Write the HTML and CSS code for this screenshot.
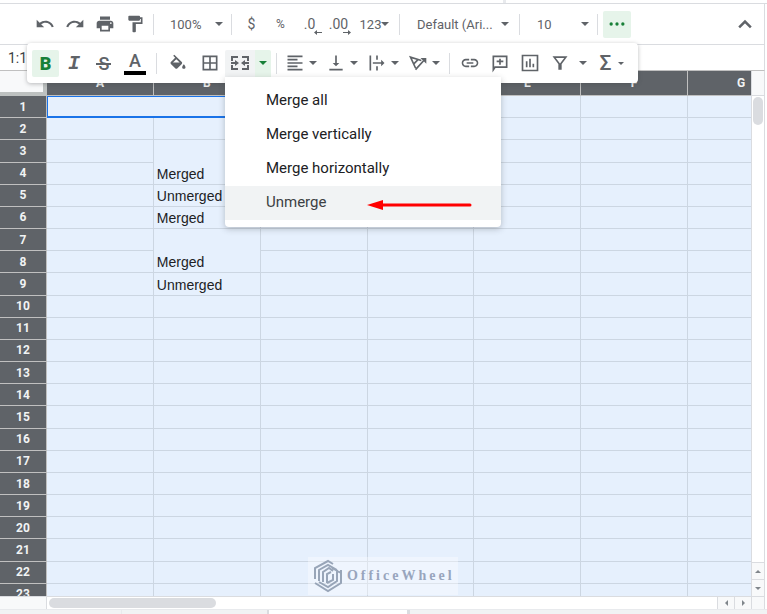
FILE: index.html
```html
<!DOCTYPE html>
<html lang="en">
<head>
    <meta charset="UTF-8">
    <meta name="viewport" content="width=device-width, initial-scale=1.0">
    <title>Spreadsheet</title>
    <link rel="stylesheet" href="styles.css">
</head>
<body>

<div class="app">
    <div class="top-strip"><div class="top-strip-left"></div></div>

    <!-- Main toolbar -->
    <div class="toolbar">
        <button class="tool" aria-label="Undo"><svg class="icon" viewBox="0 0 24 24"><path d="M12.5 8c-2.65 0-5.05.99-6.9 2.6L2 7v9h9l-3.62-3.62c1.39-1.16 3.16-1.88 5.12-1.88 3.54 0 6.55 2.31 7.6 5.5l2.37-.78C21.08 11.03 17.15 8 12.5 8z"/></svg></button>
        <button class="tool" aria-label="Redo"><svg class="icon" viewBox="0 0 24 24"><path d="M18.4 10.6C16.55 8.99 14.15 8 11.5 8c-4.65 0-8.58 3.03-9.96 7.22L3.9 16c1.05-3.19 4.05-5.5 7.6-5.5 1.95 0 3.73.72 5.12 1.88L13 16h9V7l-3.6 3.6z"/></svg></button>
        <button class="tool" aria-label="Print"><svg class="icon" viewBox="0 0 24 24"><path d="M19 8H5c-1.66 0-3 1.34-3 3v6h4v4h12v-4h4v-6c0-1.66-1.34-3-3-3zm-3 11H8v-5h8v5zm3-7c-.55 0-1-.45-1-1s.45-1 1-1 1 .45 1 1-.45 1-1 1zm-1-9H6v4h12V3z"/></svg></button>
        <button class="tool" aria-label="Paint format"><svg class="icon" viewBox="0 0 24 24"><path d="M18 4V3c0-.55-.45-1-1-1H5c-.55 0-1 .45-1 1v4c0 .55.45 1 1 1h12c.55 0 1-.45 1-1V6h1v4H9v11c0 .55.45 1 1 1h2c.55 0 1-.45 1-1v-9h8V4h-3z"/></svg></button>
        <span class="sep"></span>
        <label class="drop zoom"><select aria-label="Zoom"><option>100%</option></select></label>
        <span class="sep"></span>
        <button class="tool text first" aria-label="Format as currency">$</button>
        <button class="tool text small" aria-label="Format as percent">%</button>
        <button class="tool text" aria-label="Decrease decimal places">.0<svg class="decimal" viewBox="0 0 8 5"><path d="M3 0v2h5v1H3v2L0 2.500z"/></svg></button>
        <button class="tool text" aria-label="Increase decimal places">.00<svg class="decimal" viewBox="0 0 8 5"><path d="M5 0v2H0v1h5v2l3-2.500z"/></svg></button>
        <button class="tool text formats" aria-label="More formats">123<span class="caret"></span></button>
        <span class="sep"></span>
        <label class="drop font"><select aria-label="Font"><option>Default (Ari...</option></select></label>
        <span class="sep"></span>
        <label class="drop size"><select aria-label="Font size"><option>10</option></select></label>
        <span class="sep"></span>
        <button class="tool more active" aria-label="More"><svg class="icon" viewBox="0 0 24 24"><circle cx="5" cy="12" r="2"/><circle cx="12" cy="12" r="2"/><circle cx="19" cy="12" r="2"/></svg></button>
        <button class="tool collapse" aria-label="Hide the menus"><svg class="icon line" viewBox="0 0 24 24"><path d="M5 16l7-7 7 7"/></svg></button>

        <!-- Overflow toolbar -->
        <div class="overflow">
            <button class="tool bold active" aria-label="Bold">B</button>
            <button class="tool italic" aria-label="Italic">I</button>
            <button class="tool strike" aria-label="Strikethrough">S</button>
            <button class="tool color" aria-label="Text color"><span>A</span></button>
            <span class="sep"></span>
            <button class="tool fill" aria-label="Fill color"><svg class="icon" viewBox="0 -2 24 24"><path d="M16.560 8.940L7.620 0 6.210 1.410l2.380 2.380-5.150 5.150c-.59.59-.59 1.540 0 2.120l5.500 5.500c.29.29.68.44 1.060.44s.77-.15 1.060-.44l5.500-5.500c.59-.58.59-1.530 0-2.120zM6 9.500L10 5.400 14 9.500H6zM19 11.500s-2 2.170-2 3.500c0 1.100.9 2 2 2s2-.9 2-2c0-1.330-2-3.500-2-3.500z"/></svg></button>
            <button class="tool borders" aria-label="Borders"><svg class="icon" viewBox="0 0 24 24"><path d="M3 3v18h18V3H3zm8 16H5v-6h6v6zm0-8H5V5h6v6zm8 8h-6v-6h6v6zm0-8h-6V5h6v6z"/></svg></button>
            <div class="merge">
                <button class="tool merge-main" aria-label="Merge cells"><svg class="icon-wide" viewBox="0 0 18 14"><path class="stroke" d="M1 5V1h6M11 1h6v4M1 9v4h6M11 13h6V9M0 7h5M18 7h-5"/><path d="M4 4l4 3-4 3zM14 4l-4 3 4 3z"/></svg></button>
                <button class="tool merge-drop active" aria-label="Select merge type"><span class="caret"></span></button>
                <div class="menu" role="menu">
                    <button class="menu-item" role="menuitem">Merge all</button>
                    <button class="menu-item" role="menuitem">Merge vertically</button>
                    <button class="menu-item" role="menuitem">Merge horizontally</button>
                    <button class="menu-item selected" role="menuitem">Unmerge<svg class="arrow" viewBox="0 0 106 18"><path d="M1 12l16-5v10z"/><path class="shaft" d="M14 12h90"/></svg></button>
                </div>
            </div>
            <span class="sep"></span>
            <button class="tool pair" aria-label="Horizontal align"><svg class="icon" viewBox="0 0 24 24"><path d="M15 15H3v2h12v-2zm0-8H3v2h12V7zM3 13h18v-2H3v2zm0 8h18v-2H3v2zM3 3v2h18V3H3z"/></svg><span class="caret"></span></button>
            <button class="tool pair" aria-label="Vertical align"><svg class="icon" viewBox="0 0 24 24"><path d="M16 12h-3V3h-2v9H8l4 4 4-4zM4 19v2h16v-2H4z"/></svg><span class="caret"></span></button>
            <button class="tool pair" aria-label="Text wrapping"><svg class="icon" viewBox="0 0 24 24"><path d="M3 3h2v18H3zM11 3h2v5h-2zM11 16h2v5h-2zM7 11h10V8l4 4-4 4v-3H7z"/></svg><span class="caret"></span></button>
            <button class="tool pair" aria-label="Text rotation"><svg class="icon" viewBox="0 0 24 24"><path class="stroke" d="M9 18L3 5l13 4M7 13l5-5M9 20L19 9"/><path d="M22 6v7l-7-7z"/></svg><span class="caret"></span></button>
            <span class="sep"></span>
            <button class="tool" aria-label="Insert link"><svg class="icon" viewBox="0 0 24 24"><path d="M3.900 12c0-1.710 1.390-3.100 3.100-3.100h4V7H7c-2.760 0-5 2.240-5 5s2.240 5 5 5h4v-1.900H7c-1.710 0-3.100-1.390-3.100-3.100zM8 13h8v-2H8v2zm9-6h-4v1.900h4c1.710 0 3.100 1.390 3.100 3.100s-1.390 3.100-3.100 3.100h-4V17h4c2.760 0 5-2.240 5-5s-2.240-5-5-5z"/></svg></button>
            <button class="tool" aria-label="Insert comment"><svg class="icon" viewBox="0 0 24 24"><path class="stroke" d="M4 20V4h16v13H6zM12 7v7M8 10h8"/></svg></button>
            <button class="tool" aria-label="Insert chart"><svg class="icon" viewBox="0 0 24 24"><path class="stroke" d="M3 3h18v18H3zM8 17v-7M12 17V7M16 17v-4"/></svg></button>
            <button class="tool filter" aria-label="Create a filter"><svg class="icon" viewBox="0 0 24 24"><path class="stroke" d="M5 5h14l-6 8v6h-2v-6z"/></svg></button>
            <button class="tool views" aria-label="Filter views"><span class="caret"></span></button>
            <button class="tool sigma" aria-label="Functions">Σ<span class="caret"></span></button>
        </div>
    </div>

    <!-- Name box -->
    <div class="name-bar"><input type="text" value="1:1" aria-label="Name box"></div>

    <!-- Grid -->
    <div class="grid-area">
        <div class="sheet">
            <table class="cells">
                <thead>
                    <tr><th class="corner"></th><th>A</th><th>B</th><th>C</th><th>D</th><th>E</th><th>F</th><th>G</th></tr>
                </thead>
                <tbody>
                    <tr><th>1</th><td class="current" colspan="3"></td><td></td><td></td><td></td><td></td></tr>
                    <tr><th>2</th><td></td><td></td><td></td><td></td><td></td><td></td><td></td></tr>
                    <tr><th>3</th><td></td><td rowspan="2">Merged</td><td></td><td></td><td></td><td></td><td></td></tr>
                    <tr><th>4</th><td></td><td></td><td></td><td></td><td></td><td></td></tr>
                    <tr><th>5</th><td></td><td>Unmerged</td><td></td><td></td><td></td><td></td><td></td></tr>
                    <tr><th>6</th><td></td><td>Merged</td><td></td><td></td><td></td><td></td><td></td></tr>
                    <tr><th>7</th><td></td><td rowspan="2">Merged</td><td></td><td></td><td></td><td></td><td></td></tr>
                    <tr><th>8</th><td></td><td></td><td></td><td></td><td></td><td></td></tr>
                    <tr><th>9</th><td></td><td>Unmerged</td><td></td><td></td><td></td><td></td><td></td></tr>
                    <tr><th>10</th><td></td><td></td><td></td><td></td><td></td><td></td><td></td></tr>
                    <tr><th>11</th><td></td><td></td><td></td><td></td><td></td><td></td><td></td></tr>
                    <tr><th>12</th><td></td><td></td><td></td><td></td><td></td><td></td><td></td></tr>
                    <tr><th>13</th><td></td><td></td><td></td><td></td><td></td><td></td><td></td></tr>
                    <tr><th>14</th><td></td><td></td><td></td><td></td><td></td><td></td><td></td></tr>
                    <tr><th>15</th><td></td><td></td><td></td><td></td><td></td><td></td><td></td></tr>
                    <tr><th>16</th><td></td><td></td><td></td><td></td><td></td><td></td><td></td></tr>
                    <tr><th>17</th><td></td><td></td><td></td><td></td><td></td><td></td><td></td></tr>
                    <tr><th>18</th><td></td><td></td><td></td><td></td><td></td><td></td><td></td></tr>
                    <tr><th>19</th><td></td><td></td><td></td><td></td><td></td><td></td><td></td></tr>
                    <tr><th>20</th><td></td><td></td><td></td><td></td><td></td><td></td><td></td></tr>
                    <tr><th>21</th><td></td><td></td><td></td><td></td><td></td><td></td><td></td></tr>
                    <tr><th>22</th><td></td><td></td><td></td><td></td><td></td><td></td><td></td></tr>
                    <tr><th>23</th><td></td><td></td><td></td><td></td><td></td><td></td><td></td></tr>
                </tbody>
            </table>
            <div class="watermark">
                <svg class="logo" viewBox="0 0 30 34"><path d="M2 20V9L15 2l5 3M6 22V11l9-5 9 5M28 11v13l-13 8L2 24M24 11v11l-9 6-9-5M10 23V13l6-4 4 3M14 24V15l4-2M19 9l9 5M14 24l6-3v-6"/></svg>
                <span>OfficeWheel</span>
            </div>
        </div>
        <div class="vscroll">
            <div class="vscroll-head"></div>
            <div class="vscroll-track"><div class="vthumb"></div></div>
            <button class="step" aria-label="Scroll up"><span class="tri up"></span></button>
            <button class="step" aria-label="Scroll down"><span class="tri down"></span></button>
        </div>
    </div>

    <div class="hscroll">
        <div class="hscroll-corner"></div>
        <div class="hscroll-track"><div class="hthumb"></div></div>
        <button class="step" aria-label="Scroll left"><span class="tri left"></span></button>
        <button class="step" aria-label="Scroll right"><span class="tri right"></span></button>
        <div class="hscroll-end"></div>
    </div>

    <!-- Sheet tabs -->
    <div class="tabs"><div class="tab-add"></div><div class="tab-list"></div><div class="tab-current"></div></div>
</div>

</body>
</html>
```
FILE: styles.css
```css
* {
    box-sizing: border-box;
}

body {
    margin: 0;
    background-color: #fff;
    font-family: Roboto, "Liberation Sans", sans-serif;
    font-size: 14px;
    color: #5f6368;
}

button, select, input {
    font: inherit;
    color: inherit;
    border: none;
    background: none;
    padding: 0;
    margin: 0;
}

.app {
    display: flex;
    flex-direction: column;
    height: 100vh;
    padding-right: 2px;
    overflow: hidden;
}

.top-strip {
    flex: none;
    height: 4px;
    margin-right: -2px;
    border-bottom: 1px solid #dadce0;
}

.top-strip-left {
    width: 66%;
    height: 3px;
    border-right: 3px solid #e8eaed;
}

/* Toolbar */
.toolbar {
    position: relative;
    z-index: 2;
    display: flex;
    align-items: center;
    flex: none;
    height: 41px;
    padding-left: 30px;
    border-bottom: 1px solid #dadce0;
    border-right: 1px solid #dadce0;
    font-size: 13px;
}

.tool {
    display: flex;
    align-items: center;
    justify-content: center;
    flex: none;
    width: 30px;
    height: 27px;
    border-radius: 2px;
}

.icon {
    width: 20px;
    height: 20px;
    fill: #5f6368;
}

.icon-wide {
    width: 18px;
    height: 14px;
    fill: #5f6368;
}

.icon.line {
    fill: none;
    stroke: #5f6368;
    stroke-width: 3;
}

.stroke {
    fill: none;
    stroke: #5f6368;
    stroke-width: 2;
}

.sep {
    flex: none;
    width: 1px;
    height: 21px;
    background-color: #dadce0;
}

.toolbar > .tool + .sep {
    margin-left: 3px;
}

.caret {
    flex: none;
    border: 4px solid transparent;
    border-top-color: #5f6368;
    border-bottom: none;
}

.active {
    background-color: #e6f4ea;
    color: #188038;
}

.active .icon {
    fill: #188038;
}

.active .caret {
    border-top-color: #188038;
}

.drop {
    display: flex;
    align-items: center;
    flex: none;
    width: 77px;
    padding: 0 8px 0 16px;
}

.drop select {
    flex: 1;
    min-width: 0;
    appearance: none;
    outline: none;
}

.drop::after {
    content: "";
    border: 4px solid transparent;
    border-top-color: #5f6368;
    border-bottom: none;
}

.drop.font {
    width: 119px;
    padding: 0 10px 0 17px;
}

.drop.size {
    padding-left: 17px;
}

.tool.text {
    position: relative;
    width: 29px;
    font-size: 14px;
}

.tool.text.small {
    font-size: 12px;
}

.tool.first {
    margin-left: 5px;
}

.decimal {
    position: absolute;
    right: 2px;
    bottom: 3px;
    width: 8px;
    height: 5px;
    fill: #5f6368;
}

.tool.text.formats {
    width: 43px;
    font-size: 13px;
}

.toolbar > .more {
    width: 28px;
    margin-left: 5px;
}

.collapse {
    margin-left: auto;
    margin-right: 4px;
}

/* Second toolbar row, floats over the grid */
.overflow {
    position: absolute;
    left: 27px;
    top: 39px;
    display: flex;
    align-items: center;
    height: 40px;
    padding: 0 5px;
    border-radius: 4px;
    background-color: #fff;
    box-shadow: 0 1px 4px rgba(60, 64, 67, 0.35);
}

.bold {
    width: 27px;
    font-size: 18px;
    font-weight: 900;
}

.italic {
    font: italic bold 20px "Liberation Mono", monospace;
}

.strike {
    position: relative;
    font-size: 18px;
    font-weight: 500;
}

.strike::after {
    content: "";
    position: absolute;
    left: 7px;
    right: 8px;
    top: 13px;
    height: 2px;
    background-color: #5f6368;
}

.color {
    width: 32px;
    font-size: 18px;
    font-weight: 500;
    line-height: 20px;
}

.color span {
    width: 22px;
    border-bottom: 4px solid #000;
}

.overflow .sep {
    margin: 0 5px;
}

.fill {
    width: 32px;
}

.merge {
    position: relative;
    display: flex;
}

.borders {
    width: 31px;
}

.merge-main {
    background-color: #f1f3f4;
    border-radius: 2px 0 0 0;
}

.merge-drop {
    width: 16px;
    border-radius: 0 2px 0 0;
}

.merge + .sep {
    margin-right: 3px;
}

.pair {
    width: 41px;
    gap: 4px;
}

.views {
    width: 16px;
}

.sigma {
    width: 42px;
    gap: 7px;
    font-size: 21px;
    font-weight: 500;
}

.sigma .caret {
    border-width: 3px 3px 0;
}

/* Merge menu */
.menu {
    position: absolute;
    left: 0;
    top: 27px;
    width: 276px;
    padding: 7px 0;
    border-radius: 0 0 4px 4px;
    background-color: #fff;
    box-shadow: 0 2px 6px rgba(60, 64, 67, 0.3);
}

.menu-item {
    display: flex;
    align-items: center;
    width: 100%;
    height: 34px;
    padding: 0 0 2px 41px;
    font-size: 15px;
    color: #202124;
}

.menu-item.selected {
    background-color: #f1f3f4;
    color: #3c4043;
}

.arrow {
    width: 106px;
    height: 18px;
    margin-left: 40px;
    fill: #f00;
}

.shaft {
    stroke: #f00;
    stroke-width: 3;
    stroke-linecap: round;
}

/* Name box */
.name-bar {
    flex: none;
    height: 26px;
    padding-left: 8px;
    border-bottom: 1px solid #c0c0c0;
    border-right: 1px solid #dadce0;
}

.name-bar input {
    width: 80px;
    height: 25px;
    color: #3c4043;
}

/* Grid */
.grid-area {
    display: flex;
    flex: 1;
    min-height: 0;
    border-right: 1px solid #dadce0;
}

.sheet {
    position: relative;
    flex: 1;
    min-width: 0;
    overflow: hidden;
    background-color: #e6f0fd;
}

.cells {
    width: calc(100% + 44px);
    height: 535px;
    table-layout: fixed;
    border-collapse: separate;
    border-spacing: 0;
}

.cells th {
    padding: 0;
    background-color: #5f6368;
    border-right: 1px solid #c0c0c0;
    border-bottom: 1px solid #c0c0c0;
    font-size: 12px;
    font-weight: 700;
    line-height: 14px;
    color: #f1f3f4;
}

.cells thead tr {
    height: 25px;
}

.cells tbody tr {
    height: 22px;
}

.cells .corner {
    width: 47px;
    background-color: #f8f9fa;
    border-right: 4px solid #bdc1c0;
    border-bottom: 4px solid #bdc1c0;
}

.cells td {
    padding: 0 3px;
    border-right: 1px solid #ccd6e2;
    border-bottom: 1px solid #ccd6e2;
    font: 14px/20px "Liberation Sans", Arial, sans-serif;
    vertical-align: bottom;
    white-space: nowrap;
    color: #202124;
}

.cells .current {
    border: 1px solid #1a73e8;
    border-bottom-width: 2px;
}

.watermark {
    position: absolute;
    left: 41%;
    bottom: 1px;
    display: flex;
    align-items: center;
    gap: 4px;
    width: 150px;
    height: 38px;
    padding-left: 5px;
    background-color: rgba(255, 255, 255, 0.35);
    font: bold 14px "Liberation Serif", serif;
    letter-spacing: 3px;
    color: #98a5bd;
}

.logo {
    flex: none;
    width: 30px;
    height: 34px;
    fill: none;
    stroke: #98a5b8;
    stroke-width: 2;
}

/* Scrollbars */
.vscroll {
    display: flex;
    flex-direction: column;
    flex: none;
    width: 13px;
    border-left: 1px solid #dadce0;
}

.vscroll-head {
    height: 25px;
    background-color: #f8f9fa;
    border-bottom: 1px solid #dadce0;
}

.vscroll-track {
    flex: 1;
    padding: 1px;
}

.vthumb {
    height: 28px;
    border-radius: 5px;
    background-color: #dadce0;
}

.step {
    display: flex;
    align-items: center;
    justify-content: center;
    flex: none;
    background-color: #f8f9fa;
}

.vscroll .step {
    height: 17px;
    border-top: 1px solid #dadce0;
}

.tri {
    border: 3px solid transparent;
}

.up {
    border-top: none;
    border-bottom-color: #80868b;
}

.down {
    border-bottom: none;
    border-top-color: #80868b;
}

.left {
    border-left: none;
    border-right-color: #80868b;
}

.right {
    border-right: none;
    border-left-color: #80868b;
}

.hscroll {
    display: flex;
    flex: none;
    height: 13px;
    border-top: 1px solid #dadce0;
    border-right: 1px solid #dadce0;
}

.hscroll-corner {
    width: 47px;
    background-color: #f8f9fa;
    border-right: 1px solid #dadce0;
}

.hscroll-track {
    flex: 1;
    padding: 1px 2px;
}

.hthumb {
    width: 25%;
    height: 10px;
    border-radius: 5px;
    background-color: #dadce0;
}

.hscroll .step {
    width: 17px;
    border-left: 1px solid #dadce0;
}

.hscroll-end {
    width: 13px;
    background-color: #f8f9fa;
    border-left: 1px solid #dadce0;
}

/* Sheet tabs */
.tabs {
    display: flex;
    flex: none;
    height: 5px;
    margin-right: -2px;
    background-color: #f1f3f4;
    border-top: 1px solid #e8eaed;
}

.tab-add {
    width: 122px;
    border-right: 1px solid #e8eaed;
}

.tab-list {
    width: 147px;
    border-right: 2px solid #dadce0;
}

.tab-current {
    width: 141px;
    background-color: #fff;
    border-right: 3px solid #dadce0;
}
```
